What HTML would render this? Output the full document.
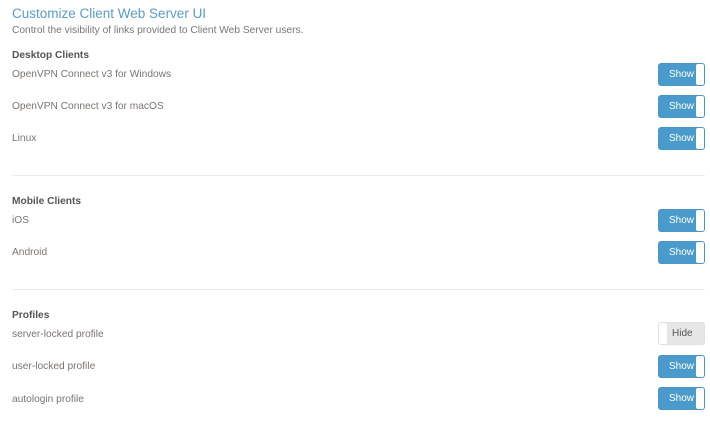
<!DOCTYPE html>
<html><head><meta charset="utf-8"><style>
body{margin:0;width:710px;height:433px;background:#fff;font-family:"Liberation Sans",sans-serif;position:relative;overflow:hidden}
.t{position:absolute;left:12px;white-space:nowrap}
.title{top:6px;font-size:13.5px;color:#5b9bc8}
.sub{top:25px;font-size:10.2px;color:#777}
.h{font-size:10.2px;color:#555;font-weight:bold}
.l{font-size:10.2px;color:#7a7470}
.hr{position:absolute;left:12px;width:693px;height:1px;background:#ebebeb}
.tg{position:absolute;left:658px;width:45px;height:21px;border:1px solid #4a97c6;background:#4a9bcb;border-radius:3px;color:#fff;font-size:10px;line-height:21px;box-sizing:content-box}
.tg span{position:absolute;left:10px;top:0}
.tg i{position:absolute;right:0;top:0;width:8px;height:21px;background:#fff;border-radius:2px}
.tg.off{background:#e6e6e6;border-color:#e0e0e0;color:#555}
.tg.off span{left:13px}
.tg.off i{left:0;right:auto}
</style></head><body>
<div class="t title">Customize Client Web Server UI</div>
<div class="t sub">Control the visibility of links provided to Client Web Server users.</div>
<div class="t h" style="top:50px">Desktop Clients</div>
<div class="t l" style="top:69px">OpenVPN Connect v3 for Windows</div>
<div class="t l" style="top:101px">OpenVPN Connect v3 for macOS</div>
<div class="t l" style="top:133px">Linux</div>
<div class="tg" style="top:63px"><span>Show</span><i></i></div>
<div class="tg" style="top:95px"><span>Show</span><i></i></div>
<div class="tg" style="top:127px"><span>Show</span><i></i></div>
<div class="hr" style="top:175px"></div>
<div class="t h" style="top:196px">Mobile Clients</div>
<div class="t l" style="top:215px">iOS</div>
<div class="t l" style="top:247px">Android</div>
<div class="tg" style="top:209px"><span>Show</span><i></i></div>
<div class="tg" style="top:241px"><span>Show</span><i></i></div>
<div class="hr" style="top:289px"></div>
<div class="t h" style="top:310px">Profiles</div>
<div class="t l" style="top:329px">server-locked profile</div>
<div class="t l" style="top:361px">user-locked profile</div>
<div class="t l" style="top:394px">autologin profile</div>
<div class="tg off" style="top:322px"><span>Hide</span><i></i></div>
<div class="tg" style="top:355px"><span>Show</span><i></i></div>
<div class="tg" style="top:387px"><span>Show</span><i></i></div>
</body></html>
